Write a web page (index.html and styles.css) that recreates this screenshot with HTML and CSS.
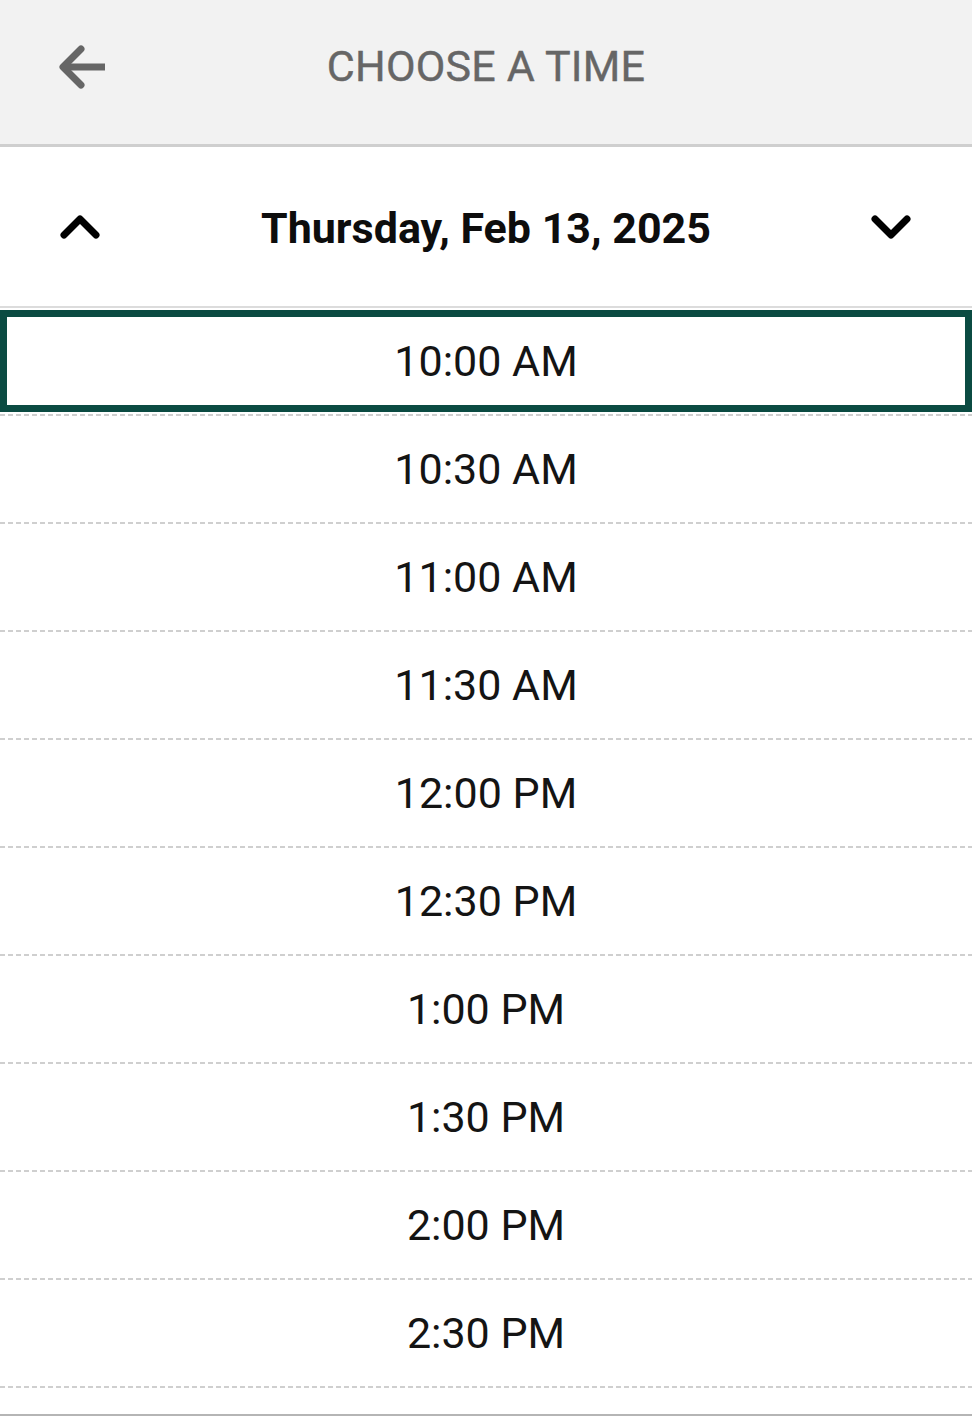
FILE: index.html
```html
<!DOCTYPE html>
<html lang="en">
<head>
<meta charset="utf-8">
<title>Choose a time</title>
<link rel="stylesheet" href="styles.css">
</head>
<body>
<div class="app">
  <header class="topbar">
    <div class="topbar-left">
      <svg class="back" width="52" height="44" viewBox="0 0 52 44" aria-hidden="true">
        <polyline points="23,4 5,22 23,40" fill="none" stroke="#666" stroke-width="7" stroke-linecap="round" stroke-linejoin="round"/>
        <line x1="6" y1="22" x2="47" y2="22" stroke="#666" stroke-width="7" stroke-linecap="butt"/>
      </svg>
    </div>
    <h1 class="title">CHOOSE A TIME</h1>
    <div></div>
  </header>

  <div class="datebar">
    <div class="datebar-left">
      <svg width="40" height="24" viewBox="0 0 40 24" aria-hidden="true">
        <polyline points="4,20 20,4 36,20" fill="none" stroke="#000" stroke-width="7" stroke-linecap="round" stroke-linejoin="round"/>
      </svg>
    </div>
    <div class="date">Thursday, Feb 13, 2025</div>
    <div class="datebar-right">
      <svg width="40" height="24" viewBox="0 0 40 24" aria-hidden="true">
        <polyline points="4,4 20,20 36,4" fill="none" stroke="#000" stroke-width="7" stroke-linecap="round" stroke-linejoin="round"/>
      </svg>
    </div>
  </div>

  <ul class="slots">
    <li class="slot"><div class="slot-inner selected">10:00 AM</div></li>
    <li class="slot"><div class="slot-inner">10:30 AM</div></li>
    <li class="slot"><div class="slot-inner">11:00 AM</div></li>
    <li class="slot"><div class="slot-inner">11:30 AM</div></li>
    <li class="slot"><div class="slot-inner">12:00 PM</div></li>
    <li class="slot"><div class="slot-inner">12:30 PM</div></li>
    <li class="slot"><div class="slot-inner">1:00 PM</div></li>
    <li class="slot"><div class="slot-inner">1:30 PM</div></li>
    <li class="slot"><div class="slot-inner">2:00 PM</div></li>
    <li class="slot"><div class="slot-inner">2:30 PM</div></li>
  </ul>
  <div class="footer"></div>
</div>
</body>
</html>
```

FILE: styles.css
```css
* { box-sizing: border-box; }
html, body {
  margin: 0;
  padding: 0;
  background: #fff;
  overflow: hidden;
}
body {
  font-family: Roboto, "Liberation Sans", Arial, sans-serif;
  color: #111;
}
.app {
  width: 972px;
  height: 1416px;
  overflow: hidden;
}
.topbar {
  height: 147px;
  padding-bottom: 12px;
  background: #f2f2f2;
  border-bottom: 3px solid #cfcfcf;
  display: grid;
  grid-template-columns: 1fr auto 1fr;
  align-items: center;
}
.topbar-left {
  padding-left: 58px;
  display: flex;
  align-items: center;
}
.back { display: block; margin-top: 1px; }
.title {
  margin: 0;
  font-size: 43px;
  font-weight: 400;
  color: #666;
  letter-spacing: 0.2px;
  -webkit-text-stroke: 0.4px #666;
}
.datebar {
  height: 161px;
  border-bottom: 2px solid #dcdcdc;
  display: grid;
  grid-template-columns: 1fr auto 1fr;
  align-items: center;
}
.datebar-left {
  padding-left: 60px;
  display: flex;
  align-items: center;
}
.datebar-right {
  padding-right: 61px;
  display: flex;
  justify-content: flex-end;
  align-items: center;
}
.datebar svg { display: block; }
.date {
  font-size: 43px;
  font-weight: 700;
  color: #0d0d0d;
  padding-top: 2px;
}
.slots {
  list-style: none;
  margin: 0;
  padding: 0;
}
.slot {
  height: 108px;
  padding-top: 2px;
  padding-bottom: 2px;
  background-image: repeating-linear-gradient(to right, #cfcfcf 0 5px, transparent 5px 8px);
  background-repeat: no-repeat;
  background-size: 100% 2px;
  background-position: 0 100%;
}
.slot-inner {
  height: 102px;
  display: flex;
  align-items: center;
  justify-content: center;
  font-size: 43px;
  color: #141414;
}
.slot-inner.selected {
  border: 7px solid #0b4b42;
}
.footer {
  margin-top: 26px;
  border-top: 2px solid #b5b5b5;
  height: 60px;
}
```
